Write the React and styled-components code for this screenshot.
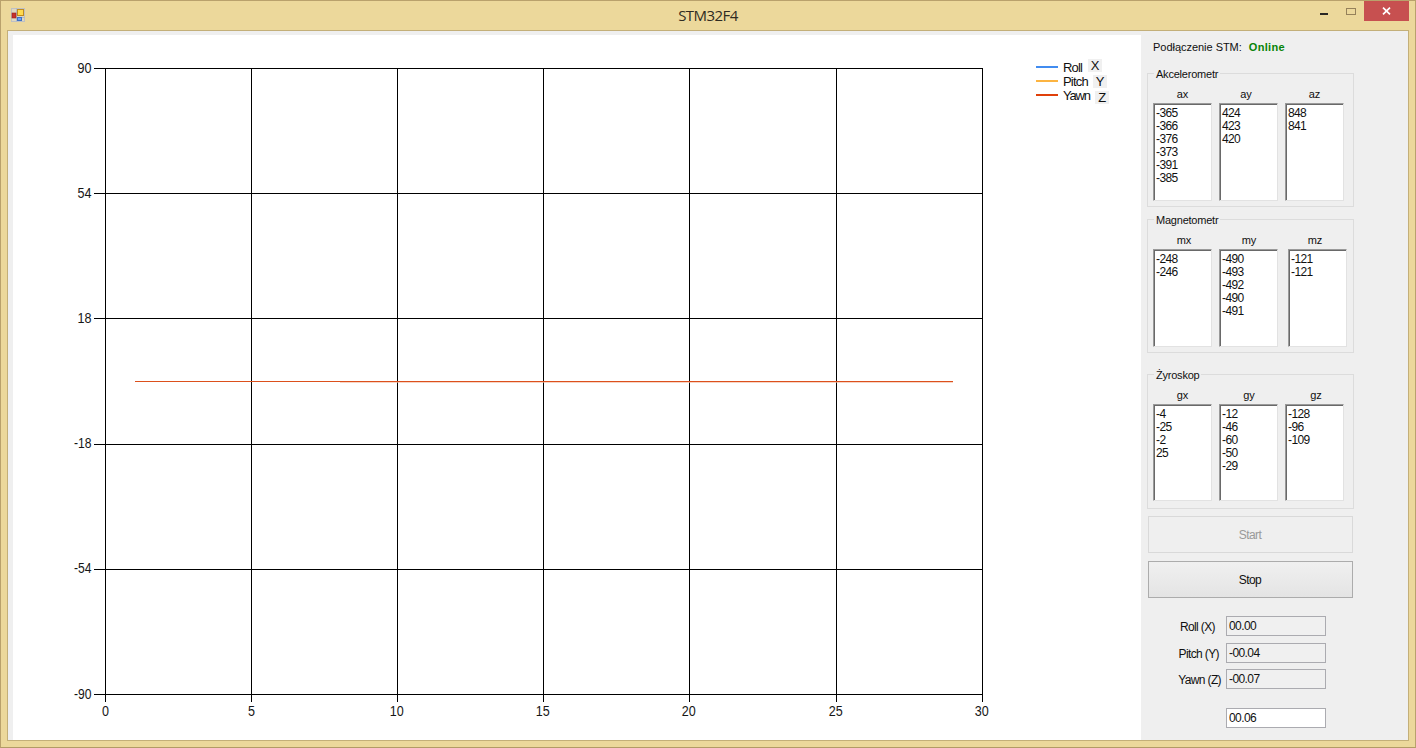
import React from "react";
import styled, { createGlobalStyle } from "styled-components";

const GlobalStyle = createGlobalStyle`
  *, *::before, *::after { box-sizing: border-box; }
  html, body { margin: 0; padding: 0; overflow: hidden; }
`;

const Window = styled.div`
  width: 1416px;
  height: 748px;
  display: flex;
  flex-direction: column;
  padding: 0 6px 6px;
  background: #ecd89b;
  border: 1px solid #b9a16c;
  border-bottom-color: #b29b66;
  font-family: "Liberation Sans", Arial, sans-serif;
  font-size: 11px;
  color: #101010;
`;

const TitleBar = styled.header`
  height: 29px;
  flex: none;
  display: grid;
  grid-template-columns: 120px 1fr 120px;
  align-items: start;
`;

const AppIcon = styled.svg`
  display: block;
  margin: 7px 0 0 4px;
`;

const Title = styled.h1`
  margin: 4px 0 0;
  text-align: center;
  font: 400 15px/20px "Open Sans", "Noto Sans", sans-serif;
  letter-spacing: -0.55px;
  color: #2f2b22;
`;

const Controls = styled.div`
  display: flex;
  justify-content: flex-end;
`;

const CloseButton = styled.button`
  width: 45px;
  height: 20px;
  padding: 0;
  border: 0;
  background: #c75050;
  display: flex;
  align-items: center;
  justify-content: center;
`;

const Client = styled.main`
  flex: 1;
  display: flex;
  border: 1px solid #c3af79;
  background: #efefef;
`;

const ChartPanel = styled.section`
  width: 1128px;
  margin: 4px 0 0 5px;
  background: #fff;
  display: flex;
`;

const ChartSvg = styled.svg`
  display: block;
  flex: none;
`;

const AxisText = styled.text`
  font: 14px "Liberation Sans", Arial, sans-serif;
  fill: #161616;
`;

const Legend = styled.ul`
  list-style: none;
  margin: 0;
  padding: 24px 0 0;
  display: flex;
  flex-direction: column;
`;

const LegendItem = styled.li`
  height: 14px;
  display: flex;
  align-items: flex-start;
  font-size: 13px;
  line-height: 17px;
  letter-spacing: -0.2px;
`;

const Swatch = styled.span`
  width: 22px;
  height: 2px;
  margin: 7px 5px 0 0;
  background: ${(p) => p.$color};
`;

const LegendName = styled.span`
  width: ${(p) => p.$width}px;
  letter-spacing: ${(p) => p.$spacing}px;
`;

const AxisBadge = styled.span`
  width: 14px;
  height: 13px;
  margin-top: ${(p) => p.$top}px;
  line-height: 14px;
  text-align: center;
  background: #f0f0f0;
`;

const Sidebar = styled.aside`
  width: 213px;
  padding-left: 6px;
  display: flex;
  flex-direction: column;
`;

const Status = styled.div`
  height: 16px;
  margin: 8px 0 0 6px;
  line-height: 16px;
  white-space: pre;
  letter-spacing: -0.03px;
`;

const Online = styled.strong`
  margin-left: 7px;
  color: #078407;
  letter-spacing: 0.3px;
`;

const Group = styled.fieldset`
  width: 207px;
  min-width: 0;
  height: ${(p) => p.$height}px;
  margin: ${(p) => p.$top}px 0 0;
  padding: 0 0 0 5px;
  border: 1px solid #dcdcdc;
`;

const GroupTitle = styled.legend`
  height: 13px;
  margin-left: 1px;
  padding: 0 2px;
  line-height: 14px;
  letter-spacing: -0.22px;
`;

const Lists = styled.div`
  display: flex;
`;

const Column = styled.div`
  width: 59px;
  flex: none;
  margin-right: ${(p) => p.$gap ?? 7}px;
`;

const Heading = styled.div`
  height: 16px;
  margin-top: 7px;
  line-height: 14px;
  text-align: center;
  padding-left: ${(p) => (p.$shift > 0 ? p.$shift : 0)}px;
  padding-right: ${(p) => (p.$shift < 0 ? -p.$shift : 0)}px;
`;

const ListBox = styled.ul`
  list-style: none;
  height: ${(p) => p.$height}px;
  margin: 0;
  padding: 3px 0 0 2px;
  background: #fff;
  border: 1px solid #e2e2e2;
  border-top-color: #9a9a9a;
  border-left-color: #9a9a9a;
  box-shadow: inset 1px 1px 0 #696969;
  font-size: 12px;
  line-height: 13px;
  letter-spacing: -0.62px;
`;

const Button = styled.button`
  width: 205px;
  height: 37px;
  margin: ${(p) => p.$top}px 0 0 1px;
  padding: 0 1px 0 0;
  border: 1px solid #acacac;
  background: linear-gradient(#f0f0f0, #e4e4e4);
  font: 12px "Liberation Sans", Arial, sans-serif;
  letter-spacing: -0.6px;
  color: #101010;

  &:disabled {
    border-color: #d9d9d9;
    background: #efefef;
    color: #999;
  }
`;

const Field = styled.label`
  height: 20px;
  margin-top: ${(p) => p.$top}px;
  display: flex;
  align-items: center;
`;

const FieldName = styled.span`
  width: 79px;
  padding: 1px ${(p) => p.$right}px 0 0;
  text-align: right;
  white-space: nowrap;
  font-size: 12px;
  letter-spacing: -0.62px;
`;

const Input = styled.input`
  width: 100px;
  height: 20px;
  padding: 0 2px 1px;
  border: 1px solid #ababb0;
  border-radius: 0;
  outline: 0;
  background: ${(p) => (p.readOnly ? "#f0f0f0" : "#fff")};
  color: #101010;
  font: 12px "Liberation Sans", Arial, sans-serif;
  letter-spacing: -0.58px;
`;

const groups = [
  {
    title: "Akcelerometr", top: 12, height: 140, box: 98,
    columns: [
      { name: "ax", shift: 0, values: [-365, -366, -376, -373, -391, -385] },
      { name: "ay", shift: -5, values: [424, 423, 420] },
      { name: "az", shift: 0, values: [848, 841] },
    ],
  },
  {
    title: "Magnetometr", top: 6, height: 140, box: 98,
    columns: [
      { name: "mx", shift: 3, values: [-248, -246] },
      { name: "my", shift: 1, gap: 10, values: [-490, -493, -492, -490, -491] },
      { name: "mz", shift: -5, values: [-121, -121] },
    ],
  },
  {
    title: "Żyroskop", top: 15, height: 141, box: 97,
    columns: [
      { name: "gx", shift: 0, values: [-4, -25, -2, 25] },
      { name: "gy", shift: 1, values: [-12, -46, -60, -50, -29] },
      { name: "gz", shift: 3, values: [-128, -96, -109] },
    ],
  },
];

const series = [
  { name: "Roll", axis: "X", color: "#418cf0", width: 25, top: 0, spacing: -0.8 },
  { name: "Pitch", axis: "Y", color: "#fcb441", width: 30, top: 2, spacing: -0.8 },
  { name: "Yawn", axis: "Z", color: "#e0400a", width: 32, top: 4, spacing: -1.2 },
];

const fields = [
  { name: "Roll (X)", value: "00.00", top: 18, right: 11 },
  { name: "Pitch (Y)", value: "-00.04", top: 7, right: 7 },
  { name: "Yawn (Z)", value: "-00.07", top: 6, right: 5 },
  { name: "", value: "00.06", top: 19, right: 0, editable: true },
];

const xTicks = [[92, 0], [238, 5], [384, 10], [530, 15], [676, 20], [823, 25], [969, 30]];
const yTicks = [[33, 90], [158, 54], [283, 18], [409, -18], [534, -54], [659, -90]];

function Chart() {
  return (
    <ChartSvg width="1023" height="705" viewBox="0 0 1023 705">
      <g fill="none" stroke="#000" shapeRendering="crispEdges">
        {xTicks.map(([x]) => <path key={x} d={`M${x + 0.5} 33V667`} />)}
        {yTicks.map(([y]) => <path key={y} d={`M81 ${y + 0.5}H970`} />)}
      </g>
      <g fill="none" shapeRendering="crispEdges">
        <path d="M122 346.5H940" stroke="#dc501c" />
        <path d="M327 347.5H940" stroke="#f4b79c" strokeOpacity="0.6" />
      </g>
      {xTicks.map(([x, n]) => (
        <AxisText key={n} x={x + (n < 10 ? 0.5 : -0.3)} y="681" textAnchor="middle" textLength={n < 10 ? 7 : 14} lengthAdjust="spacingAndGlyphs">{n}</AxisText>
      ))}
      {yTicks.map(([y, n]) => (
        <AxisText key={n} x="78.5" y={y + (n === -18 || n === -54 ? 4 : 5)} textAnchor="end" textLength={n < 0 ? 17.5 : 14} lengthAdjust="spacingAndGlyphs">{n}</AxisText>
      ))}
    </ChartSvg>
  );
}

export default function App() {
  return (
    <>
      <GlobalStyle />
      <Window>
        <TitleBar>
          <AppIcon width="14" height="14" viewBox="0 0 14 14">
            <rect x="0.5" y="0.5" width="13" height="13" fill="#dfd7c0" stroke="#bec0c3" />
            <path d="M5.5 0V14M0 9.5H14" stroke="#b5bbc5" fill="none" />
            <rect x="1" y="5" width="4" height="5" fill="#c6302c" stroke="#98201f" strokeWidth="0.6" />
            <rect x="6.5" y="1.5" width="6" height="6" fill="#ffda4e" stroke="#c18b1d" />
            <rect x="6.5" y="9.5" width="4" height="3" fill="#6ca2f4" stroke="#3f71c5" />
          </AppIcon>
          <Title>STM32F4</Title>
          <Controls>
            <svg width="50" height="20" viewBox="0 0 50 20" shapeRendering="crispEdges">
              <rect x="6" y="12" width="8" height="2" fill="#292724" />
              <rect x="32.5" y="7.5" width="9" height="6" fill="none" stroke="#95815a" />
            </svg>
            <CloseButton aria-label="Close">
              <svg width="9" height="8" viewBox="0 0 9 8">
                <path d="M1 .6L8 7.4M8 .6L1 7.4" stroke="#fff" strokeWidth="1.7" />
              </svg>
            </CloseButton>
          </Controls>
        </TitleBar>
        <Client>
          <ChartPanel>
            <Chart />
            <Legend>
              {series.map((s) => (
                <LegendItem key={s.name}>
                  <Swatch $color={s.color} />
                  <LegendName $width={s.width} $spacing={s.spacing}>{s.name}</LegendName>
                  <AxisBadge $top={s.top}>{s.axis}</AxisBadge>
                </LegendItem>
              ))}
            </Legend>
          </ChartPanel>
          <Sidebar>
            <Status>Podłączenie STM:<Online>Online</Online></Status>
            {groups.map((g) => (
              <Group key={g.title} $top={g.top} $height={g.height}>
                <GroupTitle>{g.title}</GroupTitle>
                <Lists>
                  {g.columns.map((c) => (
                    <Column key={c.name} $gap={c.gap}>
                      <Heading $shift={c.shift}>{c.name}</Heading>
                      <ListBox $height={g.box}>
                        {c.values.map((v, i) => <li key={i}>{v}</li>)}
                      </ListBox>
                    </Column>
                  ))}
                </Lists>
              </Group>
            ))}
            <Button $top={7} disabled>Start</Button>
            <Button $top={8}>Stop</Button>
            {fields.map((f) => (
              <Field key={f.value} $top={f.top}>
                <FieldName $right={f.right}>{f.name}</FieldName>
                <Input defaultValue={f.value} readOnly={!f.editable} />
              </Field>
            ))}
          </Sidebar>
        </Client>
      </Window>
    </>
  );
}
